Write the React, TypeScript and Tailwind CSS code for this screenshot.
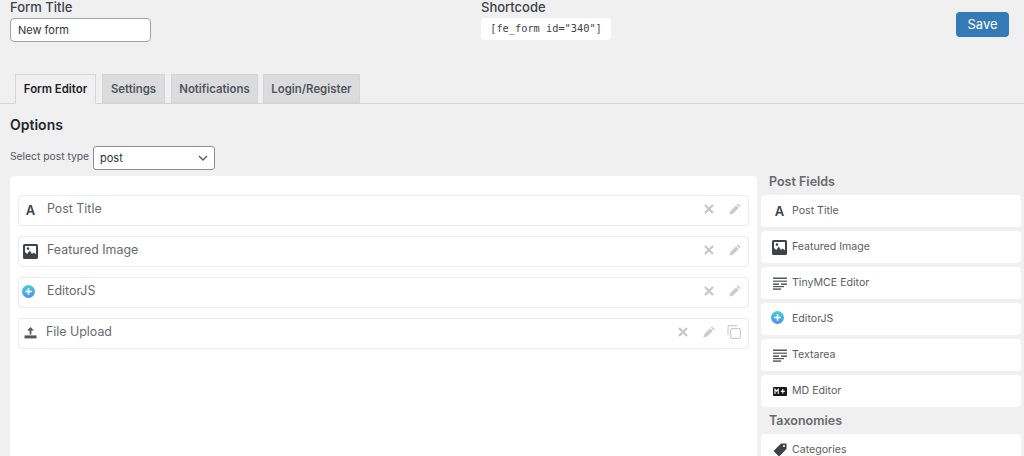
import type { ReactNode } from "react";

function ImageIcon({ size = 15 }: { size?: number }) {
  return (
    <svg width={size} height={size} viewBox="0 0 15 15">
      <rect x="0" y="0" width="15" height="15" rx="1.5" fill="#3c434a" />
      <rect x="2" y="2" width="11" height="11" fill="#fff" />
      <path d="M2 13V8l2.2 2 2.6-3.6L9 10l1.5-1.5L13 10.2V13z" fill="#3c434a" />
      <circle cx="5" cy="4.6" r="1.3" fill="#3c434a" />
    </svg>
  );
}

function PlusBall() {
  return (
    <svg width="13" height="13" viewBox="0 0 13 13" className="-ml-[4px] -mt-[3px]">
      <defs>
        <linearGradient id="ball" x1="0" y1="0" x2="0" y2="1">
          <stop offset="0" stopColor="#45d0d8" />
          <stop offset="1" stopColor="#4f8ff0" />
        </linearGradient>
      </defs>
      <circle cx="6.5" cy="6.5" r="6.5" fill="url(#ball)" />
      <path d="M6.5 3.2v6.6M3.2 6.5h6.6" stroke="#fff" strokeWidth="1.6" />
    </svg>
  );
}

function UploadIcon() {
  return (
    <svg width="13" height="12" viewBox="0 0 13 12" fill="#50575e" className="-mt-[2px]">
      <path d="M6.5 0 10 3.6H7.4V7.4H5.6V3.6H3z" />
      <rect x="0.5" y="8.4" width="12" height="3" />
    </svg>
  );
}

function LinesIcon() {
  return (
    <svg width="14" height="13" viewBox="0 0 14 13" fill="#50575e">
      <rect x="0" y="0.5" width="14" height="1.5" />
      <rect x="0" y="3.6" width="14" height="1.2" />
      <rect x="0" y="6.4" width="6" height="1.5" />
      <rect x="8" y="6.4" width="6" height="1.5" />
      <rect x="0" y="9" width="11" height="1.2" />
      <rect x="0" y="11.4" width="8" height="1.4" />
    </svg>
  );
}

function MdIcon() {
  return (
    <svg width="14" height="9" viewBox="0 0 14 9">
      <rect width="14" height="9" rx="1" fill="#16181a" />
      <path d="M2 7V2.2l1.6 2 1.6-2V7" stroke="#fff" strokeWidth="1.1" fill="none" />
      <path d="M9.8 2v4.6M7.8 4.4h4" stroke="#fff" strokeWidth="1.1" fill="none" />
    </svg>
  );
}

function TagIcon() {
  return (
    <svg width="14" height="14" viewBox="0 0 14 14" fill="#3c434a">
      <path d="M8 .5h5.5V6L6 13.5.5 8zM11 2a1 1 0 1 0 0 2 1 1 0 0 0 0-2z" fillRule="evenodd" />
    </svg>
  );
}

function CloseIcon() {
  return (
    <svg width="10" height="10" viewBox="0 0 10 10">
      <path d="M1 1l8 8M9 1 1 9" stroke="#c4c6c8" strokeWidth="2.2" />
    </svg>
  );
}

function PencilIcon() {
  return (
    <svg width="12" height="12" viewBox="0 0 12 12" fill="#c9cbcd">
      <path d="M9 .4 11.6 3 10.4 4.2 7.8 1.6zM7.1 2.3l2.6 2.6-5.9 5.9-3.4.8.8-3.4z" />
    </svg>
  );
}

function CopyIcon() {
  return (
    <svg width="14" height="14" viewBox="0 0 14 14" fill="none" stroke="#c9cbcd" strokeWidth="1.1" className="-ml-[3px]">
      <rect x="3.6" y="3.6" width="9.8" height="9.8" rx="1.4" />
      <path d="M1 10V2a1.4 1.4 0 0 1 1.4-1.4H10" />
    </svg>
  );
}

function LetterA() {
  return <span className="text-[13px] font-semibold leading-none text-[#3c434a]">A</span>;
}

function FieldRow({
  icon,
  label,
  copy,
  labelGap = "ml-[9px]",
}: {
  icon: ReactNode;
  label: string;
  copy?: boolean;
  labelGap?: string;
}) {
  return (
    <div className="flex h-[31px] items-center rounded-[4px] border border-[#e8ebef] pl-[4px] pr-[7px]">
      <span className="flex w-[15px] justify-center">{icon}</span>
      <span className={`${labelGap} -mt-[3px] text-[12.4px] text-[#666a6e]`}>{label}</span>
      <span className="ml-auto -mt-[3px] flex items-center gap-[15px]">
        <CloseIcon />
        <PencilIcon />
        {copy && <CopyIcon />}
      </span>
    </div>
  );
}

function SideCard({ icon, label }: { icon: ReactNode; label: string }) {
  return (
    <div className="flex h-[32px] shrink-0 items-center rounded-[4px] bg-white pl-[11px]">
      <span className="flex w-[15px] justify-center">{icon}</span>
      <span className="ml-[5px] text-[10.6px] text-[#5a5e62]">{label}</span>
    </div>
  );
}

export default function App() {
  return (
    <div className="h-[456px] w-[1024px] overflow-hidden bg-[#f0f0f0] font-['Inter',sans-serif] text-[#3c434a]">
      {/* cabecalho */}
      <div className="flex px-[10px]">
        <div className="w-[471px]">
          <div className="h-[18px] text-[13px] font-medium leading-[14px]">Form Title</div>
          <div className="flex h-[24px] w-[141px] items-center rounded-[4px] border border-[#a0a4a8] bg-white pl-[7px] text-[11px] text-[#2c3338]">
            New form
          </div>
        </div>
        <div>
          <div className="h-[18px] text-[13px] font-medium leading-[14px]">Shortcode</div>
          <div className="flex h-[22px] w-[130px] items-center justify-center rounded-[4px] bg-white font-['DejaVu_Sans_Mono',monospace] text-[10.3px] text-[#3c434a]">
            [fe_form id="340"]
          </div>
        </div>
        <button className="ml-auto mr-[5px] mt-[12px] h-[25px] w-[53px] rounded-[4px] bg-[#337ab7] text-[13px] text-white">
          Save
        </button>
      </div>

      {/* abas */}
      <div className="mt-[32px] flex h-[30px] gap-[6px] border-b border-[#d3d5d7] pl-[15px] text-[11.4px] font-semibold">
        <div className="flex h-[30px] w-[81px] items-center justify-center border border-[#d3d5d7] border-b-[#f0f0f0] bg-[#f0f0f0] pt-[2px] text-[#1d2327]">
          Form Editor
        </div>
        <div className="flex h-[29px] w-[63px] items-center justify-center border border-[#d3d5d7] bg-[#dcdcde] pt-[2px] text-[#50575e]">
          Settings
        </div>
        <div className="flex h-[29px] w-[87px] items-center justify-center border border-[#d3d5d7] bg-[#dcdcde] pt-[2px] text-[#50575e]">
          Notifications
        </div>
        <div className="-ml-[1px] flex h-[29px] w-[97px] items-center justify-center border border-[#d3d5d7] bg-[#dcdcde] pt-[2px] text-[#50575e]">
          Login/Register
        </div>
      </div>

      <div className="px-[10px]">
        <h2 className="mt-[12px] text-[14px] font-semibold leading-[17px] text-[#23282d]">Options</h2>
        <div className="mt-[13px] flex items-center">
          <span className="-mt-[2px] w-[79px] whitespace-nowrap text-[10.3px] text-[#50575e]">Select post type</span>
          <div className="ml-[4px] flex h-[24px] w-[122px] items-center justify-between rounded-[3px] border border-[#8c8f94] bg-white pl-[6px] pr-[5px] text-[11px] text-[#2c3338]">
            post
            <svg width="12" height="8" viewBox="0 0 12 8" fill="none" stroke="#50575e" strokeWidth="1.3">
              <path d="M2 2l4 4 4-4" />
            </svg>
          </div>
        </div>
      </div>

      <div className="flex pl-[10px] pr-[3px]">
        {/* area do formulario */}
        <div className="mt-[6px] flex h-[280px] w-[747px] flex-col gap-[10px] rounded-t-[4px] bg-white px-[8px] pt-[19px]">
          <FieldRow icon={<LetterA />} label="Post Title" />
          <FieldRow icon={<ImageIcon />} label="Featured Image" />
          <FieldRow icon={<PlusBall />} label="EditorJS" />
          <FieldRow icon={<UploadIcon />} label="File Upload" copy labelGap="ml-[8px]" />
        </div>

        {/* campos disponiveis */}
        <div className="ml-[4px] flex flex-1 flex-col">
          <div className="ml-[8px] mt-[5px] h-[15px] text-[12.5px] font-semibold leading-[14px] text-[#666a6e]">
            Post Fields
          </div>
          <div className="mt-[-5px] flex flex-col gap-[4px] pt-[10px]">
            <SideCard icon={<LetterA />} label="Post Title" />
            <SideCard icon={<ImageIcon />} label="Featured Image" />
            <SideCard icon={<LinesIcon />} label="TinyMCE Editor" />
            <SideCard icon={<PlusBall />} label="EditorJS" />
            <SideCard icon={<LinesIcon />} label="Textarea" />
            <SideCard icon={<MdIcon />} label="MD Editor" />
          </div>
          <div className="ml-[8px] mt-[6px] h-[21px] text-[12.5px] font-semibold leading-[16px] text-[#666a6e]">
            Taxonomies
          </div>
          <SideCard icon={<TagIcon />} label="Categories" />
        </div>
      </div>
    </div>
  );
}
